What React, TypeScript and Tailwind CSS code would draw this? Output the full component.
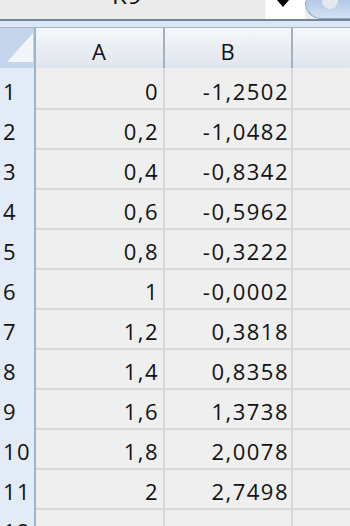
import React from 'react';

const rows: [string, string, string][] = [
  ['1', '0', '-1,2502'],
  ['2', '0,2', '-1,0482'],
  ['3', '0,4', '-0,8342'],
  ['4', '0,6', '-0,5962'],
  ['5', '0,8', '-0,3222'],
  ['6', '1', '-0,0002'],
  ['7', '1,2', '0,3818'],
  ['8', '1,4', '0,8358'],
  ['9', '1,6', '1,3738'],
  ['10', '1,8', '2,0078'],
  ['11', '2', '2,7498'],
  ['12', '', ''],
];

const App: React.FC = () => {
  return (
    <div
      className="w-[350px] h-[526px] overflow-hidden bg-[#efefef] text-[#111]"
      style={{ fontFamily: '"Open Sans", "Liberation Sans", sans-serif' }}
    >
      {/* name box / formula bar strip */}
      <div className="flex h-[19px] overflow-hidden">
        <div className="w-[265px] bg-[#ebebeb] overflow-hidden">
          <div className="ml-[112px] -mt-[17px] text-[24px] leading-none tracking-[1px]">K9</div>
        </div>
        <div className="w-[40px] bg-white flex justify-center">
          <div className="-ml-[4px] w-0 h-0 border-l-[6px] border-r-[6px] border-t-[7px] border-l-transparent border-r-transparent border-t-black" />
        </div>
        <div className="flex-1 rounded-bl-[34px] rounded-tl-[6px] border-l border-b border-[#8ba6c9] bg-gradient-to-b from-[#b3c9e7] to-[#d4e1f2]">
          <div className="ml-[16px] w-[16px] h-[9px] rounded-b-full bg-[#e4e8ee]" />
        </div>
      </div>
      <div className="h-[2px] bg-[#73859b]" />
      <div className="h-[6px] bg-[#dde7f3]" />
      <div className="h-[1px] bg-[#a8b7ca]" />

      {/* column headers */}
      <div className="grid grid-cols-[36px_129px_128px_57px] h-[40px] border-b-2 border-[#b3c0d0]">
        <div className="bg-[#c4d4ea] border-r-2 border-[#9fb3cb] relative">
          <svg className="absolute left-[7px] top-[5px]" width="26" height="29" viewBox="0 0 26 29">
            <polygon points="26,0 26,29 0,29" fill="#f2f6fb" />
          </svg>
        </div>
        <div className="bg-gradient-to-b from-[#f5f7fa] to-[#dfe5ee] border-r-2 border-[#a4b0bf] text-center text-[22px] leading-[33px] pt-[7px] tracking-[1px]">A</div>
        <div className="bg-gradient-to-b from-[#f5f7fa] to-[#dfe5ee] border-r-2 border-[#a4b0bf] text-center text-[22px] leading-[33px] pt-[7px] tracking-[1px]">B</div>
        <div className="bg-gradient-to-b from-[#f5f7fa] to-[#dfe5ee]" />
      </div>

      {rows.map(([n, a, b]) => (
        <div key={n} className="grid grid-cols-[36px_129px_128px_57px] h-[40px] text-[22px] leading-[33px] tracking-[1.5px]">
          <div className="bg-[#e3ebf6] border-r-2 border-b-2 border-r-[#9fb3cb] border-b-[#c9d4e2] pl-[3px] pt-[7px]">{n}</div>
          <div className="border-r-2 border-b-2 border-[#d8d8d8] text-right pr-[4px] pt-[7px]">{a}</div>
          <div className="border-r-2 border-b-2 border-[#d8d8d8] text-right pr-[2px] pt-[7px]">{b}</div>
          <div className="border-b-2 border-[#d8d8d8]" />
        </div>
      ))}
    </div>
  );
};

export default App;
